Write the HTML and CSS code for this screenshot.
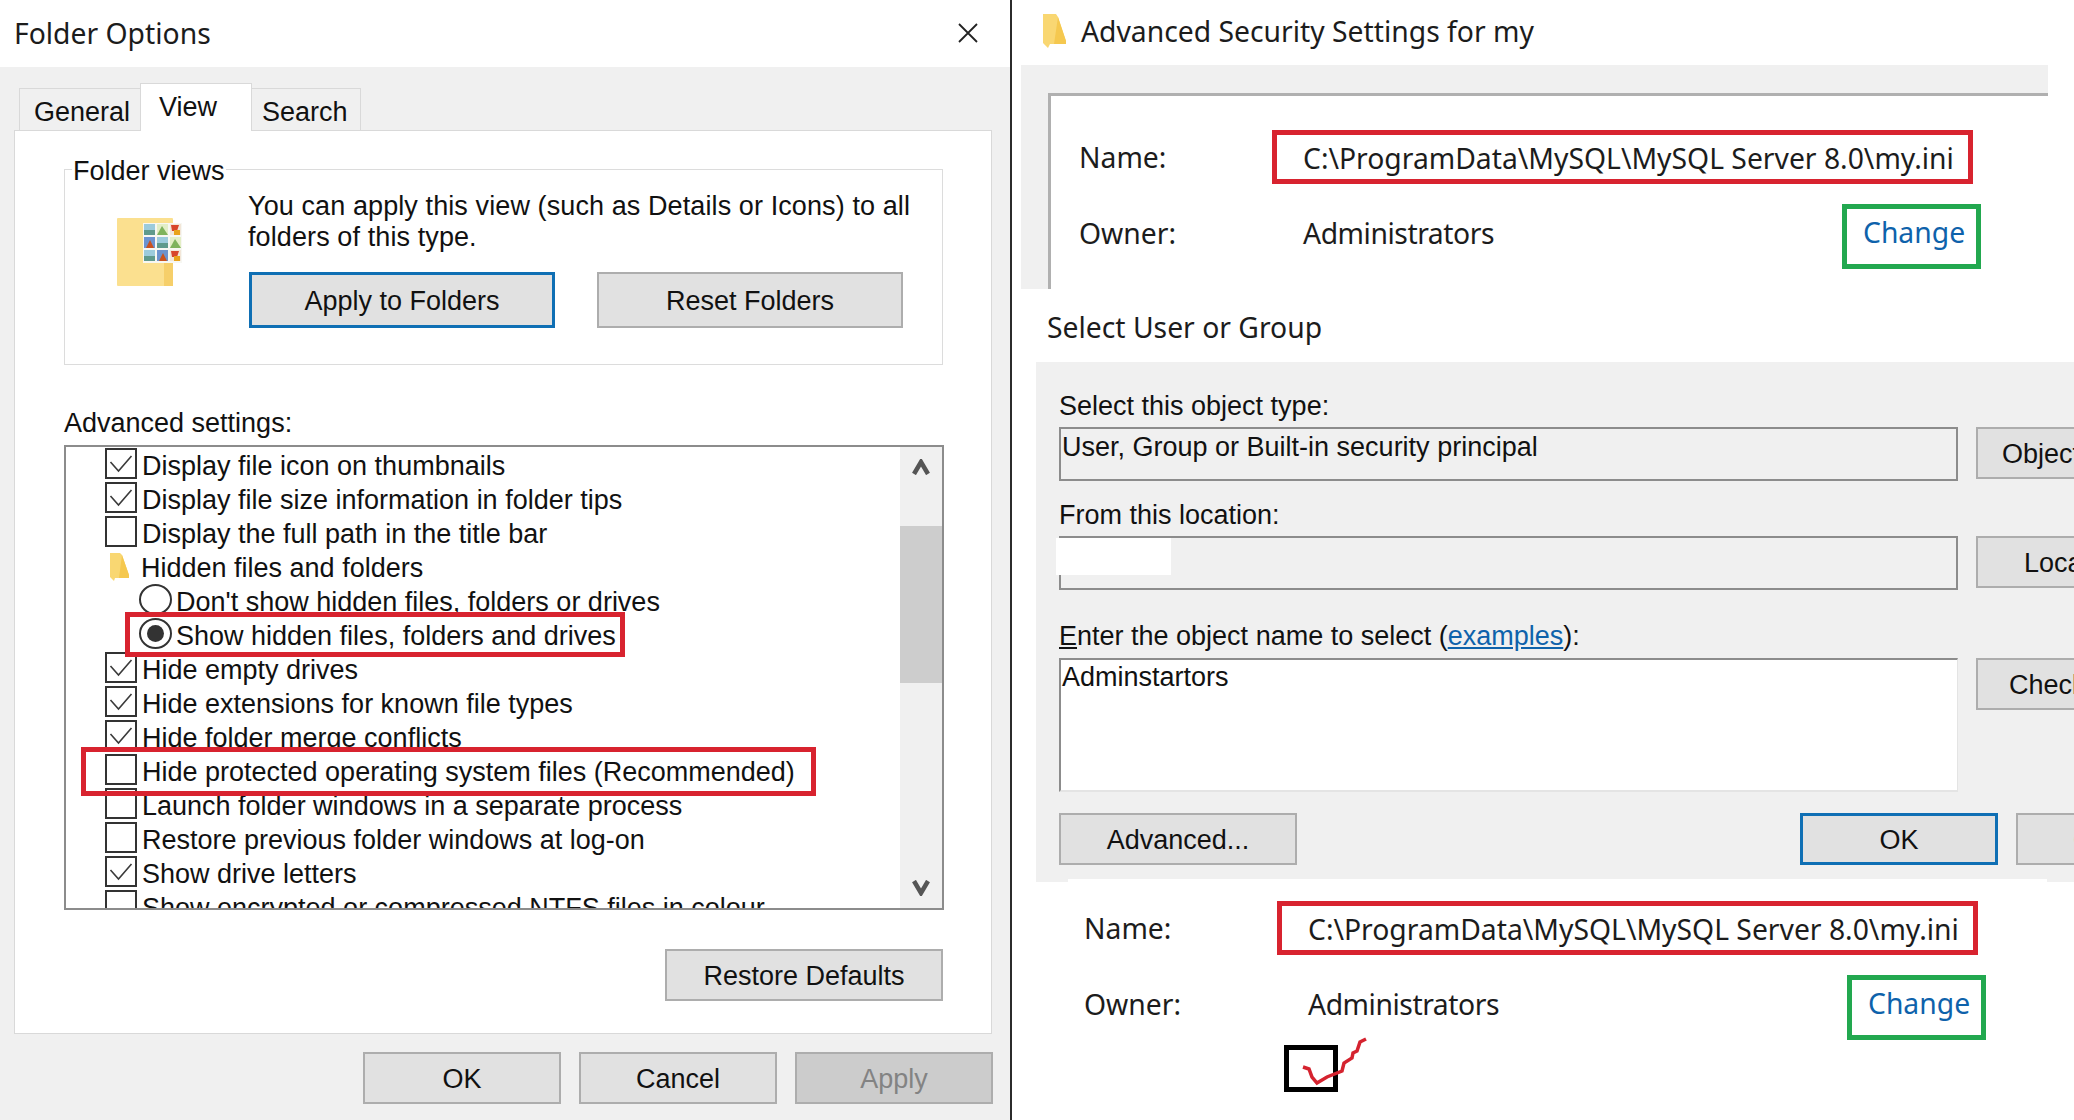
FILE: index.html
```html
<!DOCTYPE html>
<html lang="en">
<head>
    <meta charset="UTF-8">
    <title>Folder Options and Security Settings</title>
    <link rel="stylesheet" href="styles.css">
</head>
<body>
    <svg class="defs" width="0" height="0">
        <symbol id="tick" viewBox="0 0 32 31">
            <path d="M5.5 14 L13.5 23 L26.5 8" fill="none" stroke="#3a3a3a" stroke-width="1.6"/>
        </symbol>
    </svg>

    <div class="sheet">
        <!-- left: folder options -->
        <section class="folder-options">
            <div class="dlg-title">
                <span class="title-text">Folder Options</span>
                <svg class="close-x" width="20" height="20" viewBox="0 0 20 20">
                    <path d="M1 1 L19 19 M19 1 L1 19" stroke="#222" stroke-width="1.8" fill="none"/>
                </svg>
            </div>

            <div class="tabs">
                <div class="tab tab-general">General</div>
                <div class="tab tab-view">View</div>
                <div class="tab tab-search">Search</div>
            </div>

            <div class="tab-panel">
                <div class="group">
                    <span class="legend">Folder views</span>
                    <div class="group-body">
                        <svg class="big-folder" width="66" height="70" viewBox="0 0 66 70">
                            <rect x="0" y="1" width="56" height="68" rx="1" fill="#fbe08f"/>
                            <rect x="47" y="46" width="9" height="23" fill="#f6cf6a"/>
                            <rect x="26" y="6" width="39" height="40" fill="#f7f7f2"/>
                            <rect x="27" y="7" width="11" height="11" fill="#9ccbdc"/>
                            <rect x="27" y="13" width="11" height="5" fill="#5f9a8c"/>
                            <rect x="40" y="7" width="11" height="11" fill="#e3eec6"/>
                            <path d="M40 18 L45 9 L51 18 Z" fill="#7fb35c"/>
                            <rect x="53" y="7" width="11" height="11" fill="#f2e6d8"/>
                            <path d="M54 8 H62 L60 14 H55 Z" fill="#d8452a"/>
                            <rect x="57" y="13" width="6" height="5" fill="#e9a21a"/>
                            <rect x="27" y="20" width="11" height="11" fill="#6c93cf"/>
                            <path d="M29 31 L33 23 L37 31 Z" fill="#c9521f"/>
                            <rect x="40" y="20" width="11" height="11" fill="#9ccbdc"/>
                            <rect x="40" y="26" width="11" height="5" fill="#5f9a8c"/>
                            <rect x="53" y="20" width="11" height="11" fill="#e3eec6"/>
                            <path d="M53 31 L58 22 L64 31 Z" fill="#7fb35c"/>
                            <rect x="27" y="33" width="11" height="11" fill="#9ccbdc"/>
                            <rect x="27" y="39" width="11" height="5" fill="#5f9a8c"/>
                            <rect x="40" y="33" width="11" height="11" fill="#6c93cf"/>
                            <path d="M42 44 L46 36 L50 44 Z" fill="#c9521f"/>
                            <rect x="53" y="33" width="11" height="11" fill="#f2e6d8"/>
                            <path d="M54 34 H62 L60 40 H55 Z" fill="#d8452a"/>
                            <rect x="57" y="39" width="6" height="5" fill="#e9a21a"/>
                        </svg>
                        <div class="group-main">
                            <p class="group-text">You can apply this view (such as Details or Icons) to all<br>folders of this type.</p>
                            <div class="group-buttons">
                                <button class="btn btn-wide btn-focus">Apply to Folders</button>
                                <button class="btn btn-wide">Reset Folders</button>
                            </div>
                        </div>
                    </div>
                </div>

                <div class="adv-label">Advanced settings:</div>

                <div class="settings">
                    <div class="settings-rows">
                        <div class="row"><span class="box"><svg class="tick"><use href="#tick"/></svg></span>Display file icon on thumbnails</div>
                        <div class="row"><span class="box"><svg class="tick"><use href="#tick"/></svg></span>Display file size information in folder tips</div>
                        <div class="row"><span class="box"></span>Display the full path in the title bar</div>
                        <div class="row row-folder">
                            <svg class="mini-folder" width="20" height="28" viewBox="0 0 20 28">
                                <path d="M1 0 H11 L13 2 L20 22 V25 H6 L5 28 L1 24 Z" fill="#f9d772"/>
                                <path d="M13 2 L20 22 V25 H10 Z" fill="#f5c84f"/>
                            </svg>Hidden files and folders</div>
                        <div class="row row-radio"><span class="radio"></span>Don't show hidden files, folders or drives</div>
                        <div class="row row-radio"><span class="radio on"></span>Show hidden files, folders and drives</div>
                        <div class="row"><span class="box"><svg class="tick"><use href="#tick"/></svg></span>Hide empty drives</div>
                        <div class="row"><span class="box"><svg class="tick"><use href="#tick"/></svg></span>Hide extensions for known file types</div>
                        <div class="row row-cut"><span class="box"><svg class="tick"><use href="#tick"/></svg></span>Hide folder merge conflicts</div>
                        <div class="row"><span class="box"></span>Hide protected operating system files (Recommended)</div>
                        <div class="row"><span class="box"></span>Launch folder windows in a separate process</div>
                        <div class="row"><span class="box"></span>Restore previous folder windows at log-on</div>
                        <div class="row"><span class="box"><svg class="tick"><use href="#tick"/></svg></span>Show drive letters</div>
                        <div class="row"><span class="box"></span>Show encrypted or compressed NTFS files in colour</div>
                    </div>
                    <div class="scrollbar">
                        <div class="scroll-top">
                            <svg width="18" height="16" viewBox="0 0 18 16"><path d="M2 15 L9 3 L16 15" fill="none" stroke="#555" stroke-width="4.5"/></svg>
                        </div>
                        <div class="scroll-thumb"></div>
                        <div class="scroll-bottom">
                            <svg width="18" height="16" viewBox="0 0 18 16"><path d="M2 1 L9 13 L16 1" fill="none" stroke="#555" stroke-width="4.5"/></svg>
                        </div>
                    </div>
                    <div class="mark-red mark-radio"></div>
                    <div class="mark-red mark-protected"></div>
                </div>

                <div class="restore-line">
                    <button class="btn btn-restore">Restore Defaults</button>
                </div>
            </div>

            <div class="dlg-buttons">
                <button class="btn btn-dlg">OK</button>
                <button class="btn btn-dlg">Cancel</button>
                <button class="btn btn-dlg btn-off">Apply</button>
            </div>
        </section>

        <!-- right: security settings -->
        <section class="security">
            <div class="sec-title">
                <svg class="title-folder" width="24" height="34" viewBox="0 0 24 34">
                    <path d="M1 0 H14 L16 3 L24 27 V30 H8 L6 34 L1 29 Z" fill="#f9d772"/>
                    <path d="M16 3 L24 27 V30 H12 Z" fill="#f5c84f"/>
                </svg>
                <span class="title-text">Advanced Security Settings for my</span>
            </div>

            <div class="sec-grey">
                <div class="sec-inner">
                    <div class="owner-rows first">
                        <div class="owner-row">
                            <span class="name-label">Name:</span>
                            <span class="name-value">C:\ProgramData\MySQL\MySQL Server 8.0\my.ini</span>
                        </div>
                        <div class="owner-row owner-line">
                            <span class="owner-label">Owner:</span>
                            <span class="owner-value">Administrators</span>
                            <span class="change-box"><span class="change">Change</span></span>
                        </div>
                    </div>
                </div>
            </div>

            <div class="select-title"><span class="title-text">Select User or Group</span></div>

            <div class="select-panel">
                <div class="sel-label">Select this object type:</div>
                <div class="sel-row">
                    <div class="field">User, Group or Built-in security principal</div>
                    <button class="btn btn-side pad-object">Object Types...</button>
                </div>
                <div class="sel-label gap-small">From this location:</div>
                <div class="sel-row">
                    <div class="field"><div class="blanked"></div></div>
                    <button class="btn btn-side pad-location">Locations...</button>
                </div>
                <div class="sel-label gap-large"><u>E</u>nter the object name to select (<a class="link">examples</a>):</div>
                <div class="sel-row sel-row-tall">
                    <div class="field field-input">Adminstartors</div>
                    <button class="btn btn-side pad-check">Check Names</button>
                </div>
                <div class="sel-actions">
                    <button class="btn btn-advanced">Advanced...</button>
                    <button class="btn btn-side btn-focus pad-ok">OK</button>
                    <button class="btn btn-side">Cancel</button>
                </div>
            </div>

            <div class="owner-rows second">
                <div class="owner-row">
                    <span class="name-label">Name:</span>
                    <span class="name-value">C:\ProgramData\MySQL\MySQL Server 8.0\my.ini</span>
                </div>
                <div class="owner-row owner-line">
                    <span class="owner-label">Owner:</span>
                    <span class="owner-value">Administrators</span>
                    <span class="change-box"><span class="change">Change</span></span>
                </div>
            </div>

            <div class="black-box"></div>
            <svg class="red-tick" width="130" height="100" viewBox="0 0 130 100">
                <path d="M33 47 L39 49 L42 57 L47 63 L57 57 L72 51 L74 43 L82 38 L83 33 L87 31 L90 22 L96 19" fill="none" stroke="#d5232f" stroke-width="3.5"/>
            </svg>
        </section>
    </div>
</body>
</html>
```

FILE: styles.css
```css
* {
    box-sizing: border-box;
}

html, body {
    margin: 0;
    padding: 0;
    background: #fff;
}

body {
    font-family: "Liberation Sans", Arial, sans-serif;
    font-size: 27px;
    color: #111;
    overflow: hidden;
}

.defs {
    position: absolute;
}

.sheet {
    display: flex;
    width: 2074px;
    height: 1120px;
    overflow: hidden;
}

.title-text {
    font-family: "Noto Sans", sans-serif;
    font-size: 28.3px;
    line-height: 38px;
    color: #1c1c1c;
}

.btn {
    font-family: "Liberation Sans", Arial, sans-serif;
    font-size: 27px;
    color: #111;
    background: #e1e1e1;
    border: 2px solid #adadad;
    padding: 2px 0 0;
    flex: none;
}

.btn-focus {
    border: 3px solid #0f6fb4;
}

/* left dialog */
.folder-options {
    width: 1010px;
    flex: none;
    height: 1120px;
    background: #f0f0f0;
}

.dlg-title {
    height: 67px;
    background: #fff;
    display: flex;
    align-items: center;
    justify-content: space-between;
    padding: 0 32px 2px 14px;
}

.tabs {
    display: flex;
    align-items: flex-end;
    height: 47px;
    margin-top: 16px;
    padding-left: 19px;
}

.tab {
    height: 42px;
    line-height: 46px;
    background: #f0f0f0;
    border: 1px solid #d9d9d9;
    border-bottom: 0;
}

.tab-general {
    width: 122px;
    margin-right: -1px;
    padding-left: 14px;
}

.tab-search {
    width: 110px;
    margin-left: -1px;
    padding-left: 10px;
}

.tab-view {
    width: 112px;
    height: 48px;
    line-height: 46px;
    padding-left: 18px;
    background: #fff;
    position: relative;
    z-index: 1;
    margin-bottom: -1px;
}

.tab-panel {
    width: 978px;
    height: 904px;
    margin-left: 14px;
    background: #fff;
    border: 1px solid #d9d9d9;
    padding-top: 38px;
}

.group {
    width: 879px;
    height: 196px;
    margin-left: 49px;
    border: 1px solid #dcdcdc;
}

.legend {
    display: block;
    width: fit-content;
    height: 30px;
    line-height: 30px;
    margin: -14px 0 0 7px;
    padding: 0 1px;
    background: #fff;
}

.group-body {
    display: flex;
    margin-top: 5px;
}

.big-folder {
    flex: none;
    margin: 26px 0 0 52px;
}

.group-main {
    margin-left: 66px;
}

.group-text {
    margin: 0 0 0 -1px;
    line-height: 31px;
    letter-spacing: 0.1px;
}

.group-buttons {
    display: flex;
    gap: 42px;
    margin-top: 19px;
}

.btn-wide {
    width: 306px;
    height: 56px;
}

.adv-label {
    height: 30px;
    line-height: 30px;
    margin: 43px 0 7px 49px;
}

.settings {
    position: relative;
    display: flex;
    width: 880px;
    height: 465px;
    margin-left: 49px;
    border: 2px solid #8c8c8c;
}

.settings-rows {
    width: 834px;
    height: 461px;
    overflow: hidden;
}

.row {
    display: flex;
    align-items: flex-start;
    height: 34px;
    line-height: 38px;
    padding-left: 39px;
    white-space: nowrap;
    overflow: hidden;
}

.row-cut {
    height: 28px;
    margin-bottom: 6px;
}

.box {
    display: block;
    flex: none;
    width: 32px;
    height: 31px;
    margin: 1px 5px 0 0;
    border: 2px solid #333;
}

.tick {
    display: block;
    width: 32px;
    height: 31px;
    margin: -2px;
}

.row-folder {
    padding-left: 43px;
}

.mini-folder {
    flex: none;
    margin: 4px 12px 0 0;
}

.row-radio {
    padding-left: 73px;
}

.radio {
    position: relative;
    flex: none;
    width: 33px;
    height: 31px;
    margin: 1px 4px 0 0;
    border: 2px solid #333;
    border-radius: 50%;
}

.radio.on::after {
    content: "";
    position: absolute;
    left: 6px;
    top: 5px;
    width: 17px;
    height: 17px;
    border-radius: 50%;
    background: #333;
}

.scrollbar {
    width: 42px;
    height: 461px;
    background: #f0f0f0;
    display: flex;
    flex-direction: column;
}

.scroll-top {
    height: 79px;
    display: flex;
    justify-content: center;
    padding-top: 12px;
}

.scroll-thumb {
    height: 157px;
    background: #cdcdcd;
}

.scroll-bottom {
    flex: 1;
    display: flex;
    justify-content: center;
    align-items: flex-end;
    padding-bottom: 12px;
}

/* red annotation frames drawn on top of the list */
.mark-red {
    position: absolute;
    border: 5px solid #d8232f;
}

.mark-radio {
    left: 59px;
    top: 165px;
    width: 500px;
    height: 45px;
}

.mark-protected {
    left: 15px;
    top: 300px;
    width: 735px;
    height: 49px;
}

.restore-line {
    display: flex;
    justify-content: flex-end;
    padding-right: 48px;
    margin-top: 39px;
}

.btn-restore {
    width: 278px;
    height: 52px;
}

.dlg-buttons {
    display: flex;
    justify-content: flex-end;
    gap: 18px;
    padding-right: 17px;
    margin-top: 18px;
}

.btn-dlg {
    width: 198px;
    height: 52px;
}

.btn-off {
    background: #ccc;
    color: #838383;
}

/* right side */
.security {
    position: relative;
    flex: none;
    width: 1064px;
    height: 1120px;
    background: #fff;
    border-left: 2px solid #2b2b2b;
}

.sec-title {
    display: flex;
    align-items: center;
    gap: 15px;
    height: 61px;
    margin-bottom: 4px;
    padding-left: 30px;
}

.title-folder {
    flex: none;
}

.sec-grey {
    width: 1027px;
    height: 224px;
    margin-left: 9px;
    background: #f0f0f0;
    padding: 28px 0 0 27px;
}

.sec-inner {
    height: 196px;
    background: #fff;
    border-top: 3px solid #b0b0b0;
    border-left: 3px solid #b0b0b0;
}

.owner-rows.first {
    padding: 34px 0 0 28px;
}

.owner-rows.second {
    position: relative;
    width: 979px;
    margin: -3px 0 0 56px;
    padding: 22px 0 0 16px;
    background: #fff;
}

.owner-row {
    display: flex;
    align-items: center;
    width: 902px;
    font-family: "Noto Sans", sans-serif;
    font-size: 28.3px;
    color: #1c1c1c;
}

.owner-line {
    margin-top: 20px;
}

.name-label {
    width: 193px;
}

.owner-label {
    width: 224px;
    padding-bottom: 8px;
}

.owner-value {
    padding-bottom: 8px;
    letter-spacing: -0.45px;
}

.name-value {
    display: block;
    width: 701px;
    height: 54px;
    line-height: 46px;
    padding-left: 26px;
    border: 5px solid #d8232f;
    white-space: nowrap;
}

.change-box {
    display: block;
    width: 139px;
    height: 65px;
    margin-left: auto;
    padding-left: 16px;
    line-height: 47px;
    border: 5px solid #22a84f;
}

.change {
    color: #0e62ab;
}

.select-title {
    display: flex;
    align-items: center;
    height: 73px;
    padding: 2px 0 0 35px;
}

.select-panel {
    width: 1038px;
    height: 520px;
    margin-left: 24px;
    padding: 29px 0 0 23px;
    background: #f0f0f0;
    overflow: hidden;
    white-space: nowrap;
}

.sel-label {
    height: 30px;
    line-height: 30px;
    margin-bottom: 6px;
}

.gap-small {
    margin-top: 19px;
}

.gap-large {
    margin-top: 31px;
    margin-bottom: 7px;
}

.sel-row {
    display: flex;
    gap: 18px;
}

.field {
    position: relative;
    flex: none;
    width: 899px;
    height: 54px;
    padding: 3px 0 0 1px;
    line-height: 30px;
    border: 2px solid #8c8c8c;
    background: #f0f0f0;
}

.blanked {
    position: absolute;
    left: -5px;
    top: 0;
    width: 115px;
    height: 37px;
    background: #fff;
}

.sel-row-tall .field-input {
    height: 134px;
    padding-top: 2px;
    background: #fff;
    border-right: 1px solid #e4e4e4;
    border-bottom: 2px solid #e4e4e4;
}

.btn-side {
    width: 198px;
    height: 52px;
    text-align: center;
}

.pad-object {
    text-align: left;
    padding-left: 24px;
}

.pad-location {
    text-align: left;
    padding-left: 46px;
}

.pad-check {
    text-align: left;
    padding-left: 31px;
}

.link {
    color: #0e62ab;
    text-decoration: underline;
}

.sel-actions {
    display: flex;
    margin-top: 21px;
}

.btn-advanced {
    width: 238px;
    height: 52px;
    margin-right: 503px;
}

.pad-ok {
    margin-right: 18px;
}

.black-box {
    position: absolute;
    left: 272px;
    top: 1045px;
    width: 54px;
    height: 47px;
    border: 5px solid #000;
}

.red-tick {
    position: absolute;
    left: 258px;
    top: 1020px;
}
```
